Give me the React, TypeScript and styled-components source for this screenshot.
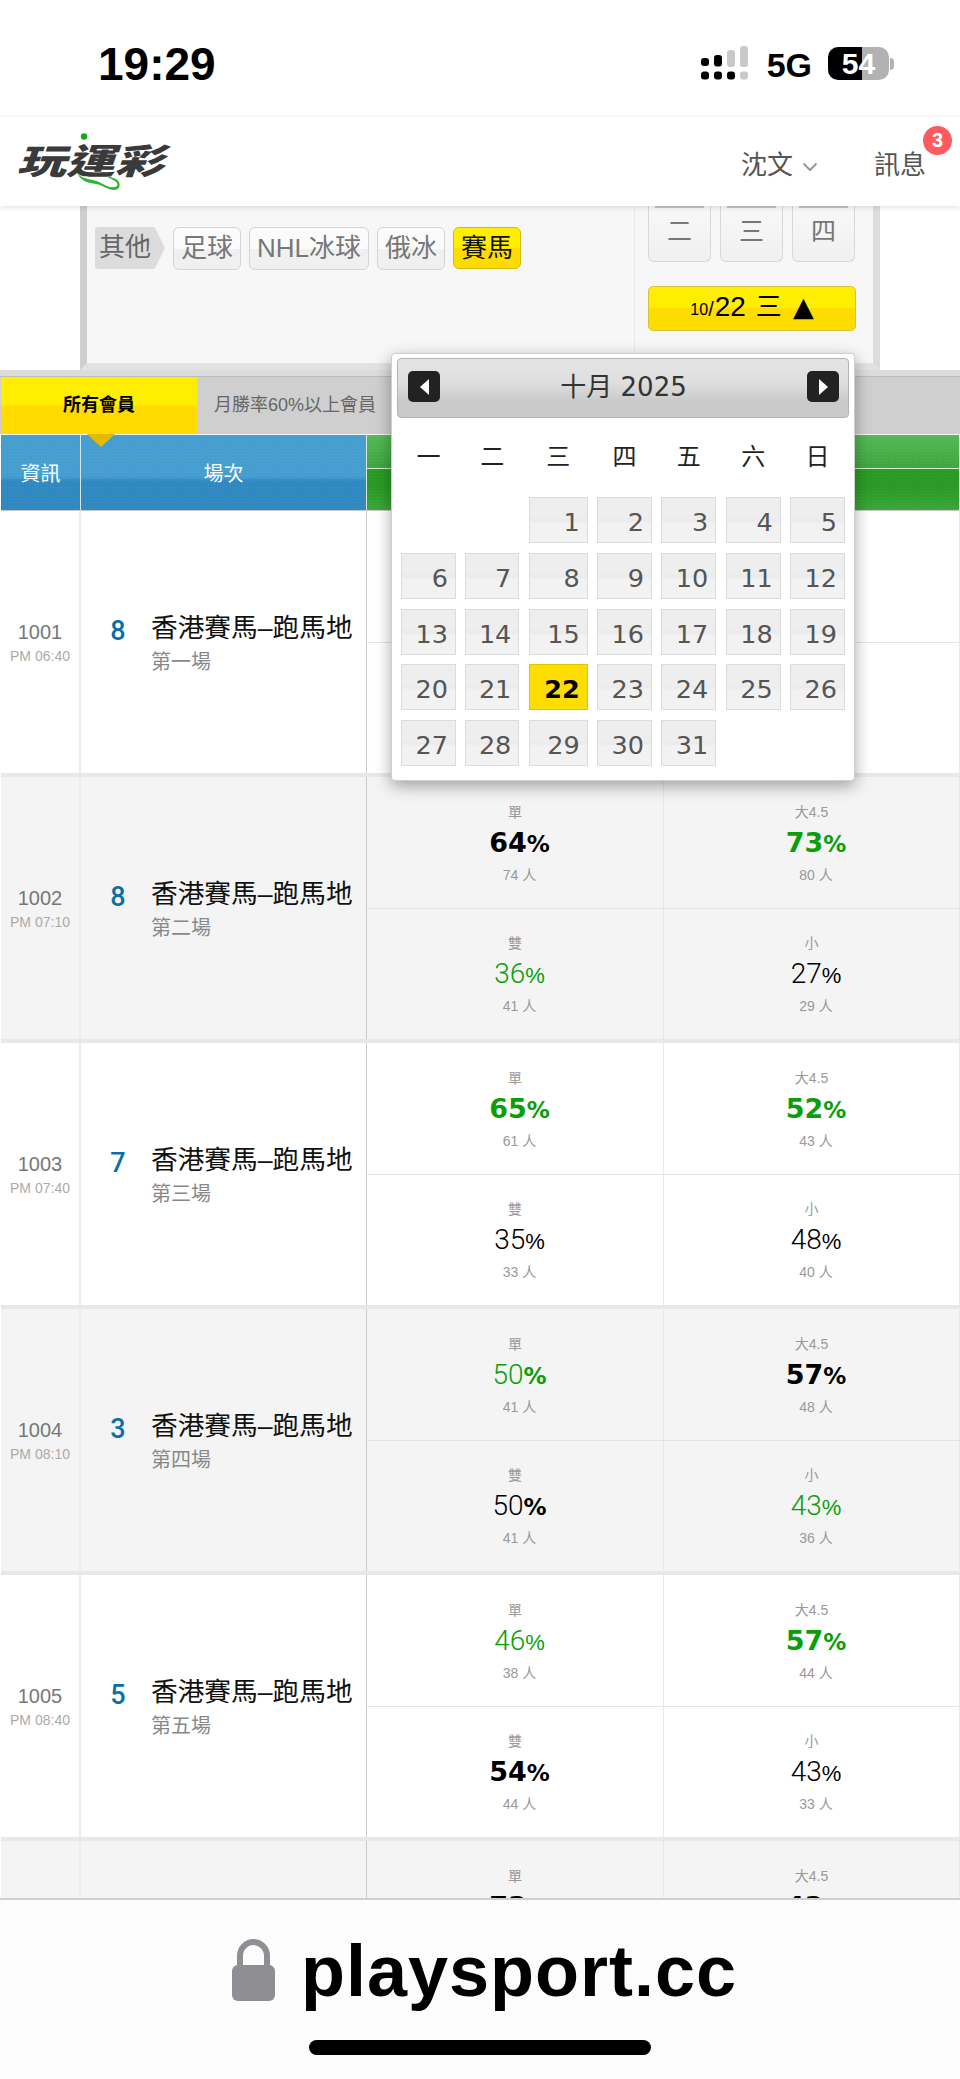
import React from "react";
import styled, { createGlobalStyle } from "styled-components";

const SANS = `"Liberation Sans", "Noto Sans CJK TC", sans-serif`;
const DEJAVU = `"DejaVu Sans", "Noto Sans CJK TC", sans-serif`;

const Global = createGlobalStyle`
  html, body { margin: 0; padding: 0; background: #fff; }
  body { font-family: ${SANS}; }
  * { box-sizing: border-box; }
`;

const Page = styled.div`
  position: relative;
  width: 960px;
  height: 2079px;
  overflow: hidden;
  display: flex;
  flex-direction: column;
  background: #fff;
`;

/* status bar */
const StatusBar = styled.div`
  height: 117px;
  flex: none;
  display: flex;
  align-items: flex-start;
  justify-content: space-between;
  padding: 36px 71px 0 98px;
  background: #fff;
`;
const Clock = styled.div`
  font: 700 46px/56px "Liberation Sans", sans-serif;
  color: #000;
`;
const StatusRight = styled.div`
  display: flex;
  align-items: center;
  height: 55px;
`;
const NetLabel = styled.div`
  font: 700 34px/40px "Liberation Sans", sans-serif;
  color: #000;
  margin: 2px 16px 0 17px;
`;
const Battery = styled.div`
  position: relative;
  width: 61px;
  height: 33px;
  border-radius: 10px;
  background: linear-gradient(90deg, #000 0 56%, #b2b2b2 56% 100%);
  color: #fff;
  font: 700 30px/33px "Liberation Sans", sans-serif;
  text-align: center;
  &::after {
    content: "";
    position: absolute;
    left: 62px;
    top: 11px;
    width: 4px;
    height: 12px;
    border-radius: 0 4px 4px 0;
    background: #b2b2b2;
  }
`;

/* site header */
const Header = styled.header`
  position: relative;
  z-index: 3;
  flex: none;
  height: 89px;
  display: flex;
  align-items: center;
  justify-content: space-between;
  padding: 0 34px 0 22px;
  background: #fff;
  box-shadow: 0 1px 6px rgba(0, 0, 0, 0.14);
`;
const Logo = styled.div`
  position: relative;
  width: 150px;
  height: 60px;
  margin-top: -6px;
`;
const LogoText = styled.div`
  font: 900 35px/60px "Noto Sans CJK TC", sans-serif;
  color: #3a3a3a;
  white-space: nowrap;
  transform-origin: left center;
  transform: scaleX(1.4) skewX(-14deg);
`;
const LogoMark = styled.svg`
  position: absolute;
  left: 0;
  top: 0;
`;
const HeaderNav = styled.nav`
  display: flex;
  align-items: center;
  padding-top: 6px;
`;
const NavLink = styled.div`
  position: relative;
  display: flex;
  align-items: center;
  font-size: 26px;
  line-height: 34px;
  color: #555;
`;
const NavUser = styled(NavLink)`
  margin-right: 56px;
`;
const NavCaret = styled.svg`
  margin: 4px 0 0 9px;
`;
const Badge = styled.span`
  position: absolute;
  right: -26px;
  top: -22px;
  width: 29px;
  height: 29px;
  border-radius: 50%;
  background: #ff5a5f;
  color: #fff;
  font: 700 20px/29px "Liberation Sans", sans-serif;
  text-align: center;
`;

/* filter panel */
const Panel = styled.section`
  flex: none;
  height: 164px;
  margin: 0 80px;
  display: grid;
  grid-template-columns: 1fr 238px;
  background: #f7f7f7;
  border-left: 7px solid #cfcfcf;
  border-right: 7px solid #dcdcdc;
  border-bottom: 7px solid #e2e2e2;
`;
const SportCol = styled.div`
  display: flex;
  align-items: flex-start;
  gap: 8px;
  padding: 21px 0 0 8px;
  border-right: 1px solid #e8e8e8;
`;
const SportLabel = styled.div`
  height: 42px;
  width: 70px;
  padding-left: 4px;
  background: #dcdcdc;
  font-size: 26px;
  line-height: 40px;
  color: #666;
  border-radius: 4px 0 0 4px;
  clip-path: polygon(0 0, 85% 0, 100% 50%, 85% 100%, 0 100%);
`;
const SportButton = styled.div<{ $active?: boolean }>`
  height: ${(p) => (p.$active ? 42 : 43)}px;
  padding: 0 7px;
  border-radius: 6px;
  font-size: 26px;
  line-height: 41px;
  color: ${(p) => (p.$active ? "#111" : "#777")};
  border: 1px solid ${(p) => (p.$active ? "#d8b800" : "#d4d4d4")};
  background: ${(p) =>
    p.$active
      ? "linear-gradient(#ffee00 0 50%, #ffdc00 50% 100%)"
      : "linear-gradient(#fbfbfb 0 50%, #f0f0f0 50% 100%)"};
`;
const DateCol = styled.div`
  padding: 0 0 0 13px;
`;
const WeekRow = styled.div`
  display: flex;
  gap: 9px;
`;
const WeekButton = styled.div`
  position: relative;
  width: 63px;
  height: 56px;
  border: 1px solid #d8d8d8;
  border-top: none;
  border-radius: 0 0 6px 6px;
  background: linear-gradient(#f8f8f8, #f0f0f0);
  font-size: 25px;
  line-height: 38px;
  padding-top: 6px;
  text-align: center;
  color: #777;
  &::before {
    content: "";
    position: absolute;
    left: 6px;
    right: 6px;
    top: 0;
    height: 2px;
    background: #c4c4c4;
  }
`;
const DateButton = styled.div`
  width: 208px;
  height: 45px;
  margin-top: 24px;
  padding-bottom: 4px;
  border: 1px solid #d6c040;
  border-radius: 5px;
  background: linear-gradient(#ffee00 0 50%, #ffdc00 50% 100%);
  color: #000;
  display: flex;
  align-items: center;
  justify-content: center;
  font-size: 28px;
  line-height: 40px;
`;
const DateSmall = styled.span`
  font-size: 16px;
  padding-top: 7px;
`;
const DateSlash = styled.span`
  font-size: 20px;
  padding-top: 5px;
  margin-right: 1px;
`;
const DateWeek = styled.span`
  font-size: 26px;
  margin: 0 11px 0 10px;
`;
const DateCaret = styled.span`
  font: 400 27px/40px "DejaVu Sans", sans-serif;
`;

/* tabs */
const TabBar = styled.div`
  flex: none;
  height: 65px;
  display: flex;
  padding-left: 1px;
  background: #cfcfcf;
  border-top: 6px solid #dcdcdc;
  border-bottom: 1px solid #f4f4f4;
  box-shadow: inset 0 1px 0 #bdbdbd;
`;
const TabActive = styled.div`
  position: relative;
  z-index: 1;
  width: 196px;
  margin-top: 1px;
  background: linear-gradient(#ffee00 0 48%, #ffdb00 52% 100%);
  font-size: 18px;
  font-weight: 700;
  line-height: 57px;
  text-align: center;
  color: #000;
  &::after {
    content: "";
    position: absolute;
    left: 86px;
    top: 57px;
    border-style: solid;
    border-width: 13px 14px 0;
    border-color: #e8b800 transparent transparent;
  }
`;
const Tab = styled.div`
  padding-left: 17px;
  margin-top: 1px;
  font-size: 18px;
  line-height: 57px;
  color: #666;
`;

/* table */
const Table = styled.div`
  flex: 1;
  min-height: 0;
  overflow: hidden;
  background: #fff;
  margin: 0 0 0 1px;
`;
const TableHead = styled.div`
  height: 76px;
  display: grid;
  grid-template-columns: 80px 286px 1fr;
  border-bottom: 1px solid #c8c8c8;
`;
const BlueHead = styled.div`
  display: flex;
  align-items: center;
  justify-content: center;
  font-size: 20px;
  color: #fff;
  border-right: 1px solid #d8e6ef;
  background-color: #3b94c8;
  background-image:
    radial-gradient(rgba(255, 255, 255, 0.07) 1px, transparent 1px),
    linear-gradient(#459dd0 0 55%, #2f88c0 62% 100%);
  background-size: 3px 3px, 100% 100%;
`;
const GreenHead = styled.div`
  display: grid;
  grid-template-rows: 33px 1fr;
  gap: 1px;
  margin-right: 1px;
  background: #d8ecd8;
`;
const GreenTop = styled.div`
  background-image:
    radial-gradient(rgba(255, 255, 255, 0.08) 1px, transparent 1px),
    linear-gradient(#55b955, #3da63d);
  background-size: 3px 3px, 100% 100%;
`;
const GreenBottom = styled.div`
  background-image:
    radial-gradient(rgba(255, 255, 255, 0.06) 1px, transparent 1px),
    linear-gradient(#2a9a24 0 45%, #3aa63a 100%);
  background-size: 3px 3px, 100% 100%;
`;
const Row = styled.div<{ $shaded: boolean }>`
  height: 266px;
  display: grid;
  grid-template-columns: 80px 286px 297px 1fr;
  border-bottom: 4px solid #e8e8e8;
  background: ${(p) => (p.$shaded ? "#f4f4f4" : "#fff")};
`;
const InfoCell = styled.div`
  display: flex;
  flex-direction: column;
  align-items: center;
  justify-content: center;
  padding-top: 2px;
  border-right: 2px solid #eeeeee;
`;
const GameNo = styled.div`
  font-size: 20px;
  line-height: 26px;
  color: #777;
`;
const GameTime = styled.div`
  font-size: 14px;
  line-height: 22px;
  color: #aaa;
  white-space: nowrap;
`;
const MatchCell = styled.div`
  display: flex;
  align-items: center;
  padding-left: 8px;
  border-right: 1px solid #cccccc;
`;
const RunnerCount = styled.div`
  width: 58px;
  margin: 0 4px 22px 0;
  text-align: center;
  font: 500 27px/34px Roboto, sans-serif;
  color: #0a6fa5;
`;
const MatchText = styled.div`
  display: flex;
  flex-direction: column;
  gap: 3px;
  padding-top: 2px;
`;
const MatchName = styled.div`
  font-size: 26.7px;
  line-height: 34px;
  color: #111;
  white-space: nowrap;
`;
const MatchSub = styled.div`
  font-size: 20px;
  line-height: 28px;
  color: #888;
`;
const OddsCol = styled.div`
  display: grid;
  grid-template-rows: 132px 1fr;
  border-right: 1px solid #e8e8e8;
`;
const OddsCell = styled.div<{ $lower?: boolean }>`
  display: flex;
  flex-direction: column;
  align-items: center;
  padding-top: ${(p) => (p.$lower ? 24 : 25)}px;
  border-bottom: ${(p) => (p.$lower ? "none" : "1px solid #e4e4e4")};
`;
const OddsLabel = styled.div`
  font-size: 14px;
  line-height: 20px;
  color: #999;
`;
const Percent = styled.div<{ $bold: boolean; $green: boolean }>`
  margin-left: 9px;
  height: 42px;
  line-height: 42px;
  white-space: nowrap;
  color: ${(p) => (p.$green ? "#0a9e0a" : "#000")};
  font-family: ${(p) => (p.$bold ? DEJAVU : `Roboto, ${SANS}`)};
  font-weight: ${(p) => (p.$bold ? 700 : 300)};
  font-size: ${(p) => (p.$bold ? 27 : 28)}px;
`;
const PercentSign = styled.span<{ $bold: boolean }>`
  font-family: ${(p) => (p.$bold ? DEJAVU : SANS)};
  font-weight: ${(p) => (p.$bold ? 700 : 400)};
  font-size: ${(p) => (p.$bold ? 23 : 22)}px;
`;
const OddsCount = styled.div`
  margin-left: 9px;
  font-size: 14px;
  line-height: 22px;
  color: #999;
`;

/* bottom browser bar */
const UrlBar = styled.div`
  flex: none;
  height: 181px;
  background: #fcfcfc;
  border-top: 2px solid #cfcfcf;
  display: flex;
  flex-direction: column;
  align-items: center;
`;
const UrlRow = styled.div`
  display: flex;
  align-items: center;
  height: 80px;
  margin-top: 30px;
  margin-left: 9px;
`;
const UrlText = styled.div`
  font: 700 72px/80px "Liberation Sans", sans-serif;
  letter-spacing: 1px;
  color: #000;
  margin-left: 26px;
  padding-top: 2px;
`;
const HomeBar = styled.div`
  width: 342px;
  height: 15px;
  margin-top: 30px;
  border-radius: 8px;
  background: #000;
`;

/* calendar overlay */
const Calendar = styled.div`
  position: absolute;
  z-index: 2;
  left: 391px;
  top: 353px;
  width: 464px;
  height: 428px;
  padding: 4px 5px;
  background: #fff;
  border: 1px solid #cfcfcf;
  border-radius: 4px;
  box-shadow: 0 5px 16px rgba(0, 0, 0, 0.35);
`;
const CalHead = styled.div`
  height: 60px;
  display: flex;
  align-items: center;
  justify-content: space-between;
  padding: 0 9px 0 10px;
  border: 1px solid #b4b4b4;
  border-radius: 4px;
  background: linear-gradient(#e4e4e4 0, #dfdfdf 40%, #cacaca 72%, #c9c9c9 100%);
`;
const CalNav = styled.div`
  width: 32px;
  height: 31px;
  margin-top: -3px;
  border-radius: 5px;
  background: #222;
  display: flex;
  align-items: center;
  justify-content: center;
`;
const CalTitle = styled.div`
  font: 400 26px/34px ${DEJAVU};
  color: #333;
  margin-top: -2px;
`;
const CalGridRow = styled.div`
  display: grid;
  grid-template-columns: 55px 54px 59px 55px 55px 55px 55px;
  column-gap: 9.33px;
  padding-left: 4px;
`;
const CalWeek = styled(CalGridRow)`
  height: 46px;
  margin: 14px 0 19px;
  align-items: center;
  text-align: center;
  font: 400 24px/46px "Noto Sans CJK TC", sans-serif;
  color: #222;
`;
const CalDays = styled(CalGridRow)`
  grid-auto-rows: 46px;
  row-gap: 9.75px;
`;
const CalDay = styled.div<{ $today?: boolean }>`
  text-align: right;
  padding-right: 7px;
  font: ${(p) => (p.$today ? 700 : 400)} 25.5px/49px ${DEJAVU};
  color: ${(p) => (p.$today ? "#000" : "#555")};
  border: 1px solid ${(p) => (p.$today ? "#e2c400" : "#dcdcdc")};
  background: ${(p) =>
    p.$today ? "#ffdd00" : "linear-gradient(#eeeeee 0 45%, #eaeaea 50%, #f2f2f2 58% 100%)"};
`;

type Odd = { label: string; pct: number; people: number; bold?: boolean; green?: boolean; boldSign?: boolean };
type Game = {
  no: string;
  time: string;
  runners: number;
  sub: string;
  left?: [Odd, Odd];
  right?: [Odd, Odd];
};

const games: Game[] = [
  { no: "1001", time: "PM 06:40", runners: 8, sub: "第一場" },
  {
    no: "1002", time: "PM 07:10", runners: 8, sub: "第二場",
    left: [{ label: "單", pct: 64, people: 74, bold: true }, { label: "雙", pct: 36, people: 41, green: true }],
    right: [{ label: "大4.5", pct: 73, people: 80, bold: true, green: true }, { label: "小", pct: 27, people: 29 }],
  },
  {
    no: "1003", time: "PM 07:40", runners: 7, sub: "第三場",
    left: [{ label: "單", pct: 65, people: 61, bold: true, green: true }, { label: "雙", pct: 35, people: 33 }],
    right: [{ label: "大4.5", pct: 52, people: 43, bold: true, green: true }, { label: "小", pct: 48, people: 40 }],
  },
  {
    no: "1004", time: "PM 08:10", runners: 3, sub: "第四場",
    left: [{ label: "單", pct: 50, people: 41, green: true, boldSign: true }, { label: "雙", pct: 50, people: 41, boldSign: true }],
    right: [{ label: "大4.5", pct: 57, people: 48, bold: true }, { label: "小", pct: 43, people: 36, green: true }],
  },
  {
    no: "1005", time: "PM 08:40", runners: 5, sub: "第五場",
    left: [{ label: "單", pct: 46, people: 38, green: true }, { label: "雙", pct: 54, people: 44, bold: true }],
    right: [{ label: "大4.5", pct: 57, people: 44, bold: true, green: true }, { label: "小", pct: 43, people: 33 }],
  },
  {
    no: "", time: "", runners: 0, sub: "",
    left: [{ label: "單", pct: 73, people: 0, bold: true }, { label: "", pct: 0, people: 0 }],
    right: [{ label: "大4.5", pct: 43, people: 0, bold: true }, { label: "", pct: 0, people: 0 }],
  },
];

const OddBlock = ({ odd, lower }: { odd?: Odd; lower?: boolean }) => (
  <OddsCell $lower={lower}>
    {odd && odd.label && (
      <>
        <OddsLabel>{odd.label}</OddsLabel>
        <Percent $bold={!!odd.bold} $green={!!odd.green}>
          {odd.pct}
          <PercentSign $bold={!!odd.bold || !!odd.boldSign}>%</PercentSign>
        </Percent>
        {odd.people > 0 && <OddsCount>{odd.people} 人</OddsCount>}
      </>
    )}
  </OddsCell>
);

const SignalIcon = () => (
  <svg width="49" height="36" viewBox="0 0 49 36" aria-hidden="true">
    <g fill="#000">
      <rect x="0" y="12" width="8" height="8" rx="3" />
      <rect x="0" y="25.500" width="8" height="8" rx="3" />
      <rect x="13" y="9" width="8" height="11.500" rx="3" />
      <rect x="13" y="25.500" width="8" height="8" rx="3" />
      <rect x="26" y="25.500" width="8" height="8" rx="3" />
    </g>
    <g fill="#c9c9c9">
      <rect x="26" y="4" width="8" height="17" rx="3" />
      <rect x="39" y="0" width="8" height="21" rx="3" />
      <rect x="39" y="25.500" width="8" height="8" rx="3" />
    </g>
  </svg>
);

const Triangle = ({ dir }: { dir: "left" | "right" }) => (
  <svg width="11" height="16" viewBox="0 0 11 16" aria-hidden="true">
    <path d={dir === "left" ? "M10 0v16L1 8z" : "M1 0v16l9-8z"} fill="#fff" />
  </svg>
);

const blanks = [0, 0];
const days = Array.from({ length: 31 }, (_, i) => i + 1);

export default function App() {
  return (
    <Page>
      <Global />
      <StatusBar>
        <Clock>19:29</Clock>
        <StatusRight>
          <SignalIcon />
          <NetLabel>5G</NetLabel>
          <Battery>54</Battery>
        </StatusRight>
      </StatusBar>

      <Header>
        <Logo>
          <LogoText>玩運彩</LogoText>
          <LogoMark width="150" height="70" viewBox="0 0 150 70" aria-hidden="true">
            <circle cx="62" cy="7.500" r="3.200" fill="#1aa51a" />
            <path d="M55 44c7 8 16 5 24 10 5 3 12 6 16 3 1-1 0-4-2-5-3-2-6-3-10-5 5 1 12 2 14 6 2 5-1 8-5 8-6 0-12-5-18-6-8-1-15-3-19-11z" fill="#2fb52f" />
          </LogoMark>
        </Logo>
        <HeaderNav>
          <NavUser>
            沈文
            <NavCaret width="16" height="10" viewBox="0 0 16 10" aria-hidden="true">
              <path d="M1.500 1.500 8 8l6.500-6.500" fill="none" stroke="#999" strokeWidth="2" />
            </NavCaret>
          </NavUser>
          <NavLink>
            訊息
            <Badge>3</Badge>
          </NavLink>
        </HeaderNav>
      </Header>

      <Panel>
        <SportCol>
          <SportLabel>其他</SportLabel>
          <SportButton>足球</SportButton>
          <SportButton>NHL冰球</SportButton>
          <SportButton>俄冰</SportButton>
          <SportButton $active>賽馬</SportButton>
        </SportCol>
        <DateCol>
          <WeekRow>
            <WeekButton>二</WeekButton>
            <WeekButton>三</WeekButton>
            <WeekButton>四</WeekButton>
          </WeekRow>
          <DateButton>
            <DateSmall>10</DateSmall>
            <DateSlash>/</DateSlash>
            22
            <DateWeek>三</DateWeek>
            <DateCaret>▲</DateCaret>
          </DateButton>
        </DateCol>
      </Panel>

      <TabBar>
        <TabActive>所有會員</TabActive>
        <Tab>月勝率60%以上會員</Tab>
      </TabBar>

      <Table>
        <TableHead>
          <BlueHead>資訊</BlueHead>
          <BlueHead>場次</BlueHead>
          <GreenHead>
            <GreenTop />
            <GreenBottom />
          </GreenHead>
        </TableHead>
        {games.map((g, i) => (
          <Row key={i} $shaded={i % 2 === 1}>
            <InfoCell>
              <GameNo>{g.no}</GameNo>
              <GameTime>{g.time}</GameTime>
            </InfoCell>
            <MatchCell>
              {g.runners > 0 && (
                <>
                  <RunnerCount>{g.runners}</RunnerCount>
                  <MatchText>
                    <MatchName>香港賽馬–跑馬地</MatchName>
                    <MatchSub>{g.sub}</MatchSub>
                  </MatchText>
                </>
              )}
            </MatchCell>
            <OddsCol>
              <OddBlock odd={g.left?.[0]} />
              <OddBlock odd={g.left?.[1]} lower />
            </OddsCol>
            <OddsCol>
              <OddBlock odd={g.right?.[0]} />
              <OddBlock odd={g.right?.[1]} lower />
            </OddsCol>
          </Row>
        ))}
      </Table>

      <UrlBar>
        <UrlRow>
          <svg width="43" height="62" viewBox="0 0 43 62" aria-hidden="true">
            <path d="M8 28V17a13.500 14 0 0 1 27 0v11" fill="none" stroke="#8e8e93" strokeWidth="6" />
            <rect x="0" y="26" width="43" height="36" rx="6" fill="#8e8e93" />
          </svg>
          <UrlText>playsport.cc</UrlText>
        </UrlRow>
        <HomeBar />
      </UrlBar>

      <Calendar>
        <CalHead>
          <CalNav><Triangle dir="left" /></CalNav>
          <CalTitle>十月 2025</CalTitle>
          <CalNav><Triangle dir="right" /></CalNav>
        </CalHead>
        <CalWeek>
          {["一", "二", "三", "四", "五", "六", "日"].map((d) => (
            <div key={d}>{d}</div>
          ))}
        </CalWeek>
        <CalDays>
          {blanks.map((_, i) => (
            <div key={i} />
          ))}
          {days.map((d) => (
            <CalDay key={d} $today={d === 22}>{d}</CalDay>
          ))}
        </CalDays>
      </Calendar>
    </Page>
  );
}
